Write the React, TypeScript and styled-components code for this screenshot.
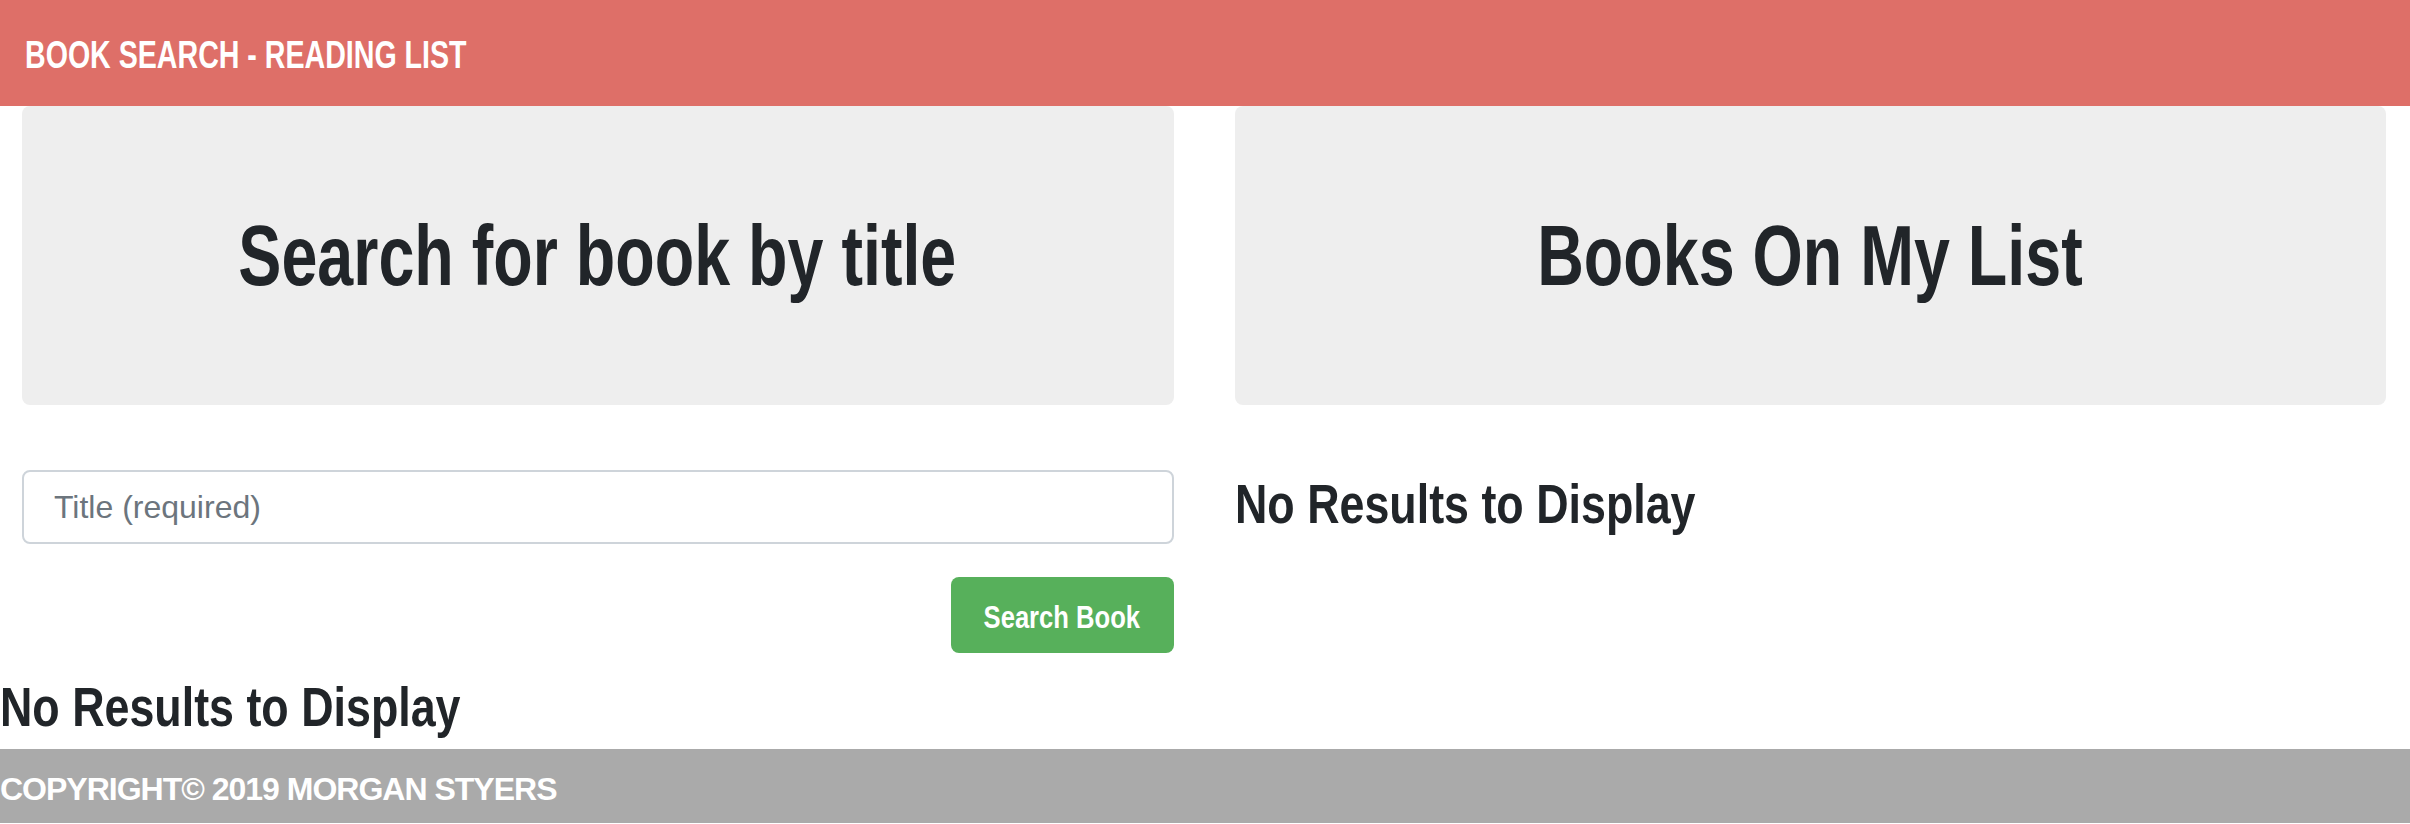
import React from "react";
import styled, { createGlobalStyle } from "styled-components";

const sans = `"Liberation Sans", Arial, sans-serif`;

const Global = createGlobalStyle`
  html, body { margin: 0; padding: 0; background: #ffffff; }
  body { font-family: ${sans}; color: #212529; }
  * { box-sizing: border-box; }
`;

const NavBar = styled.nav`
  height: 106px;
  background: #de6f68;
  display: flex;
  align-items: center;
  padding: 3px 0 0 25px;
`;

const Brand = styled.span`
  display: inline-block;
  font-family: ${sans};
  font-weight: 700;
  font-size: 39px;
  color: #ffffff;
  white-space: nowrap;
  transform: scaleX(0.733);
  transform-origin: left center;
`;

const Columns = styled.main`
  display: grid;
  grid-template-columns: 1fr 1fr;
  column-gap: 61px;
  padding: 0 24px 0 22px;
`;

const Column = styled.section`
  display: flex;
  flex-direction: column;
`;

const Jumbotron = styled.div`
  height: 299px;
  background: #eeeeee;
  border-radius: 8px;
  display: flex;
  align-items: center;
  justify-content: center;
`;

const JumboTitle = styled.h1`
  margin: 0;
  font-family: ${sans};
  font-weight: 700;
  font-size: 85px;
  color: #212529;
  white-space: nowrap;
  transform: scaleX(0.76);
`;

const SearchForm = styled.form`
  display: flex;
  flex-direction: column;
  margin-top: 65px;
`;

const TitleInput = styled.input`
  height: 74px;
  border: 2px solid #ced4da;
  border-radius: 8px;
  padding: 0 30px;
  font-family: ${sans};
  font-size: 32px;
  color: #495057;
  outline: none;
  &::placeholder { color: #6c757d; }
`;

const ButtonRow = styled.div`
  display: flex;
  justify-content: flex-end;
  margin-top: 33px;
`;

const SearchButton = styled.button`
  height: 76px;
  width: 223px;
  border: none;
  border-radius: 8px;
  background: #57b05b;
  padding: 5px 0 0 0;
  display: flex;
  align-items: center;
  justify-content: center;
  cursor: pointer;
`;

const ButtonLabel = styled.span`
  display: inline-block;
  font-family: ${sans};
  font-weight: 700;
  font-size: 32px;
  color: #ffffff;
  white-space: nowrap;
  transform: scaleX(0.8);
`;

const Empty = styled.h2<{ $top: number }>`
  margin: ${(p) => p.$top}px 0 0 0;
  font-family: ${sans};
  font-weight: 700;
  font-size: 56px;
  line-height: 67px;
  color: #212529;
  white-space: nowrap;
  transform: scaleX(0.8);
  transform-origin: left center;
`;

const Footer = styled.footer`
  margin-top: 9px;
  height: 74px;
  background: #aaaaaa;
  display: flex;
  align-items: center;
  padding-top: 7px;
`;

const FooterText = styled.span`
  font-family: ${sans};
  font-weight: 700;
  font-size: 32px;
  letter-spacing: -1px;
  color: #ffffff;
`;

export default function App() {
  return (
    <>
      <Global />
      <NavBar>
        <Brand>BOOK SEARCH - READING LIST</Brand>
      </NavBar>
      <Columns>
        <Column>
          <Jumbotron>
            <JumboTitle>Search for book by title</JumboTitle>
          </Jumbotron>
          <SearchForm onSubmit={(e) => e.preventDefault()}>
            <TitleInput type="text" placeholder="Title (required)" />
            <ButtonRow>
              <SearchButton type="submit">
                <ButtonLabel>Search Book</ButtonLabel>
              </SearchButton>
            </ButtonRow>
          </SearchForm>
        </Column>
        <Column>
          <Jumbotron>
            <JumboTitle>Books On My List</JumboTitle>
          </Jumbotron>
          <Empty $top={65}>No Results to Display</Empty>
        </Column>
      </Columns>
      <Empty $top={20}>No Results to Display</Empty>
      <Footer>
        <FooterText>COPYRIGHT© 2019 MORGAN STYERS</FooterText>
      </Footer>
    </>
  );
}
